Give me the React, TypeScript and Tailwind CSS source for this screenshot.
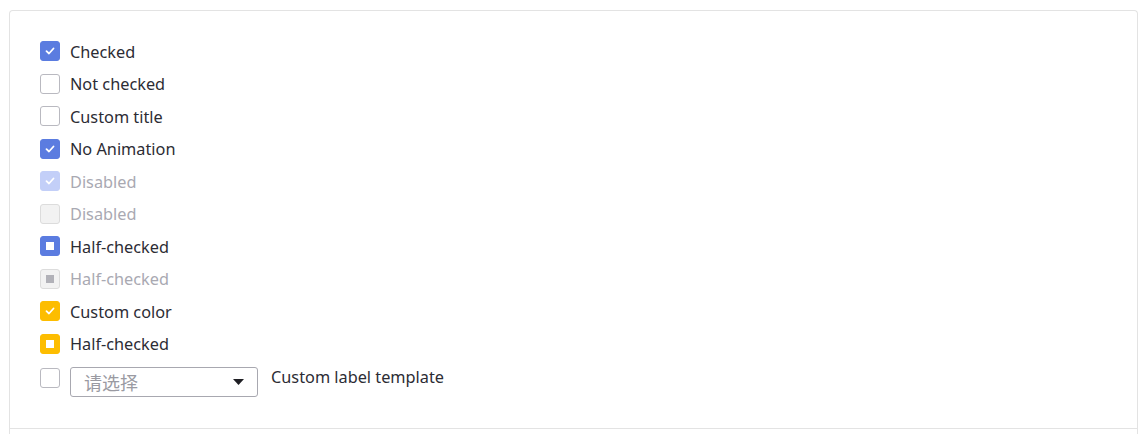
type Variant = "checked" | "unchecked" | "half";

const Box = ({
  state,
  disabled,
  color = "blue",
}: {
  state: Variant;
  disabled?: boolean;
  color?: "blue" | "yellow";
}) => {
  let cls = "border border-[#b9b9c0] bg-white";
  if (state !== "unchecked") {
    if (disabled && state === "checked") cls = "bg-[#c3cff8] border border-[#c3cff8]";
    else if (disabled) cls = "bg-[#f2f2f2] border border-[#dcdcdc]";
    else if (color === "yellow") cls = "bg-[#fdbd00] border border-[#fdbd00]";
    else cls = "bg-[#5b7ce0] border border-[#5b7ce0]";
  } else if (disabled) {
    cls = "bg-[#f2f2f2] border border-[#dcdcdc]";
  }

  return (
    <span className={"w-5 h-5 rounded-[3px] flex items-center justify-center shrink-0 " + cls}>
      {state === "checked" && (
        <svg width="10" height="8" viewBox="0 0 10 8" fill="none">
          <path d="M1.5 4.2 L4 6.5 L8.5 1.5" stroke="white" strokeWidth="1.8" strokeLinecap="round" strokeLinejoin="round" />
        </svg>
      )}
      {state === "half" && (
        <span className={"w-2 h-2 " + (disabled ? "bg-[#b1b1b8]" : "bg-white")} />
      )}
    </span>
  );
};

const rows: { label: string; state: Variant; disabled?: boolean; color?: "blue" | "yellow" }[] = [
  { label: "Checked", state: "checked" },
  { label: "Not checked", state: "unchecked" },
  { label: "Custom title", state: "unchecked" },
  { label: "No Animation", state: "checked" },
  { label: "Disabled", state: "checked", disabled: true },
  { label: "Disabled", state: "unchecked", disabled: true },
  { label: "Half-checked", state: "half" },
  { label: "Half-checked", state: "half", disabled: true },
  { label: "Custom color", state: "checked", color: "yellow" },
  { label: "Half-checked", state: "half", color: "yellow" },
];

export default function App() {
  return (
    <div className="w-[1147px] h-[434px] bg-white pt-[10px] pl-[9px] pr-[9px] overflow-hidden font-['Noto_Sans','Noto_Sans_CJK_SC',sans-serif] text-[16.3px] text-[#2c2c34]">
      <div className="border border-[#e3e3e3] rounded-t-[4px] border-b-0 h-[440px]">
        <div className="pl-[30px] pt-[24px] h-[417px]">
          {rows.map((r, i) => (
            <div key={i} className="h-[32.5px] flex items-center gap-[10px]">
              <Box state={r.state} disabled={r.disabled} color={r.color} />
              <span className={"pt-[1px] " + (r.disabled ? "text-[#a9a9b2]" : "")}>{r.label}</span>
            </div>
          ))}
          <div className="h-[34px] flex items-center gap-[10px] mt-[0.5px]">
            <Box state="unchecked" />
            <div className="w-[188px] h-[30px] border border-[#a8a8b0] rounded-[3px] flex items-center justify-between pl-[13px] pr-[13px] self-end mb-[-2px]">
              <span className="text-[#9a9aa2] text-[18px] font-['Noto_Sans_CJK_SC',sans-serif] leading-none">请选择</span>
              <svg width="11" height="6" viewBox="0 0 11 6">
                <path d="M0 0 H11 L5.5 6 Z" fill="#1f1f24" />
              </svg>
            </div>
            <span className="ml-[3px] self-start mt-[4px]">Custom label template</span>
          </div>
        </div>
        <div className="border-t border-[#e3e3e3]" />
      </div>
    </div>
  );
}
